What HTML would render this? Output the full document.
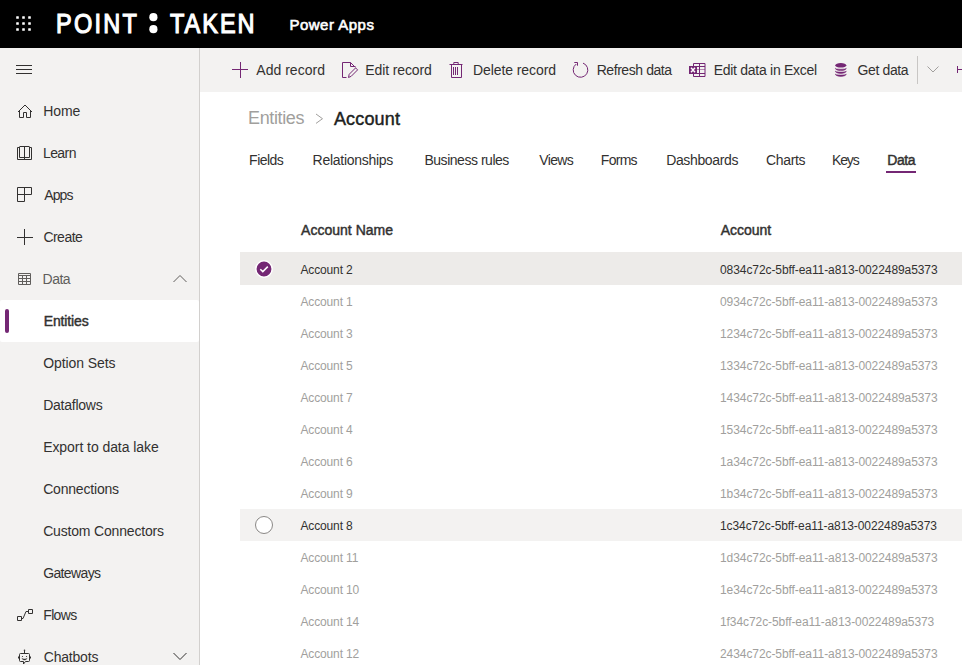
<!DOCTYPE html>
<html><head><meta charset="utf-8">
<style>
*{margin:0;padding:0;box-sizing:border-box}
html,body{width:962px;height:665px;overflow:hidden;background:#fff;font-family:"Liberation Sans",sans-serif;color:#323130}
div{position:absolute;white-space:nowrap}
.r{left:240px;width:722px;height:32px}
.n,.g{font-size:12px;line-height:14px;color:#a19f9d}
.n{left:300.5px}.g{left:720px}
.k{color:#323130}
svg{position:absolute;left:0;top:0}
</style></head><body>
<div style="left:0;top:0;width:962px;height:48px;background:#000"></div>
<div style="left:0;top:48px;width:199px;height:617px;background:#f3f2f1"></div>
<div style="left:200px;top:48px;width:762px;height:44px;background:#f3f2f1"></div>
<div style="left:0;top:300px;width:199px;height:42px;background:#fff;border-radius:2px"></div>
<div style="left:199px;top:48px;width:1px;height:617px;background:#d2d0ce"></div>
<div style="left:5px;top:309px;width:4px;height:24px;background:#742774;border-radius:2px"></div>
<div style="left:886px;top:171px;width:30px;height:2px;background:#742774"></div>
<div style="left:917px;top:56px;width:1px;height:28px;background:#c8c6c4"></div>
<div class="r" style="top:252px;height:33px;background:#edebe9"></div>
<div class="r" style="top:509px;background:#f3f2f1"></div>

<div id="pt" style="left:56.04px;top:9px;font-size:28px;line-height:30px;color:#fff;-webkit-text-stroke:1.2px #fff;transform:scaleX(0.84);transform-origin:0 0;letter-spacing:2.670px">POINT</div>
<div id="tk" style="left:170.00px;top:9px;font-size:28px;line-height:30px;color:#fff;-webkit-text-stroke:1.2px #fff;transform:scaleX(0.84);transform-origin:0 0;letter-spacing:2.350px">TAKEN</div>
<div id="pa" style="left:289.40px;top:16px;font-size:15px;line-height:17px;color:#fff;-webkit-text-stroke:0.6px #fff;letter-spacing:0.500px">Power Apps</div>
<div id="s0" style="left:43.16px;top:103px;font-size:14px;line-height:16px;color:#323130;letter-spacing:-0.060px">Home</div>
<div id="s1" style="left:42.92px;top:145px;font-size:14px;line-height:16px;color:#323130;letter-spacing:-0.562px">Learn</div>
<div id="s2" style="left:44.20px;top:187px;font-size:14px;line-height:16px;color:#323130;letter-spacing:-0.870px">Apps</div>
<div id="s3" style="left:43.40px;top:229px;font-size:14px;line-height:16px;color:#323130;letter-spacing:-0.522px">Create</div>
<div id="s4" style="left:42.60px;top:271px;font-size:14px;line-height:16px;color:#605e5c;letter-spacing:-0.510px">Data</div>
<div id="s5" style="left:43.72px;top:313px;font-size:14px;line-height:16px;color:#323130;-webkit-text-stroke:0.45px #323130;letter-spacing:-0.141px">Entities</div>
<div id="s6" style="left:43.16px;top:355px;font-size:14px;line-height:16px;color:#323130;letter-spacing:-0.072px">Option Sets</div>
<div id="s7" style="left:43.16px;top:397px;font-size:14px;line-height:16px;color:#323130;letter-spacing:-0.236px">Dataflows</div>
<div id="s8" style="left:43.16px;top:439px;font-size:14px;line-height:16px;color:#323130;letter-spacing:-0.065px">Export to data lake</div>
<div id="s9" style="left:43.16px;top:481px;font-size:14px;line-height:16px;color:#323130;letter-spacing:-0.189px">Connections</div>
<div id="s10" style="left:43.16px;top:523px;font-size:14px;line-height:16px;color:#323130;letter-spacing:-0.180px">Custom Connectors</div>
<div id="s11" style="left:43.16px;top:565px;font-size:14px;line-height:16px;color:#323130;letter-spacing:-0.617px">Gateways</div>
<div id="s12" style="left:43.24px;top:607px;font-size:14px;line-height:16px;color:#323130;letter-spacing:-0.652px">Flows</div>
<div id="s13" style="left:43.72px;top:649px;font-size:14px;line-height:16px;color:#323130;letter-spacing:-0.193px">Chatbots</div>
<div id="c0" style="left:256.32px;top:62px;font-size:14px;line-height:16px;color:#323130;letter-spacing:0.020px">Add record</div>
<div id="c1" style="left:365.32px;top:62px;font-size:14px;line-height:16px;color:#323130;letter-spacing:-0.126px">Edit record</div>
<div id="c2" style="left:472.88px;top:62px;font-size:14px;line-height:16px;color:#323130;letter-spacing:-0.067px">Delete record</div>
<div id="c3" style="left:596.64px;top:62px;font-size:14px;line-height:16px;color:#323130;letter-spacing:-0.425px">Refresh data</div>
<div id="c4" style="left:713.72px;top:62px;font-size:14px;line-height:16px;color:#323130;letter-spacing:-0.281px">Edit data in Excel</div>
<div id="c5" style="left:857.48px;top:62px;font-size:14px;line-height:16px;color:#323130;letter-spacing:-0.360px">Get data</div>
<div id="b0" style="left:248.00px;top:108px;font-size:18px;line-height:20px;color:#a19f9d;letter-spacing:-0.360px">Entities</div>
<div id="b1" style="left:333.96px;top:109px;font-size:18px;line-height:20px;color:#201f1e;-webkit-text-stroke:0.45px #201f1e;letter-spacing:0.150px">Account</div>
<div id="t0" style="left:249.12px;top:152px;font-size:14px;line-height:16px;color:#323130;letter-spacing:-0.522px">Fields</div>
<div id="t1" style="left:312.60px;top:152px;font-size:14px;line-height:16px;color:#323130;letter-spacing:-0.278px">Relationships</div>
<div id="t2" style="left:424.44px;top:152px;font-size:14px;line-height:16px;color:#323130;letter-spacing:-0.471px">Business rules</div>
<div id="t3" style="left:539.32px;top:152px;font-size:14px;line-height:16px;color:#323130;letter-spacing:-0.653px">Views</div>
<div id="t4" style="left:600.84px;top:152px;font-size:14px;line-height:16px;color:#323130;letter-spacing:-0.720px">Forms</div>
<div id="t5" style="left:666.16px;top:152px;font-size:14px;line-height:16px;color:#323130;letter-spacing:-0.360px">Dashboards</div>
<div id="t6" style="left:766.04px;top:152px;font-size:14px;line-height:16px;color:#323130;letter-spacing:-0.342px">Charts</div>
<div id="t7" style="left:831.88px;top:152px;font-size:14px;line-height:16px;color:#323130;letter-spacing:-1.080px">Keys</div>
<div id="t8" style="left:887.32px;top:152px;font-size:14px;line-height:16px;color:#323130;-webkit-text-stroke:0.45px #323130;letter-spacing:-0.480px">Data</div>
<div id="h0" style="left:301.12px;top:222px;font-size:14px;line-height:16px;color:#323130;-webkit-text-stroke:0.45px #323130;letter-spacing:0.008px">Account Name</div>
<div id="h1" style="left:720.80px;top:222px;font-size:14px;line-height:16px;color:#323130;-webkit-text-stroke:0.45px #323130;letter-spacing:-0.045px">Account</div>
<div class="n k" style="top:263px;letter-spacing:-0.150px">Account 2</div><div class="g k" style="top:263px;letter-spacing:-0.080px">0834c72c-5bff-ea11-a813-0022489a5373</div>
<div class="n" style="top:295px;letter-spacing:-0.150px">Account 1</div><div class="g" style="top:295px;letter-spacing:-0.080px">0934c72c-5bff-ea11-a813-0022489a5373</div>
<div class="n" style="top:327px;letter-spacing:-0.150px">Account 3</div><div class="g" style="top:327px;letter-spacing:-0.080px">1234c72c-5bff-ea11-a813-0022489a5373</div>
<div class="n" style="top:359px;letter-spacing:-0.150px">Account 5</div><div class="g" style="top:359px;letter-spacing:-0.080px">1334c72c-5bff-ea11-a813-0022489a5373</div>
<div class="n" style="top:391px;letter-spacing:-0.150px">Account 7</div><div class="g" style="top:391px;letter-spacing:-0.080px">1434c72c-5bff-ea11-a813-0022489a5373</div>
<div class="n" style="top:423px;letter-spacing:-0.150px">Account 4</div><div class="g" style="top:423px;letter-spacing:-0.080px">1534c72c-5bff-ea11-a813-0022489a5373</div>
<div class="n" style="top:455px;letter-spacing:-0.150px">Account 6</div><div class="g" style="top:455px;letter-spacing:-0.080px">1a34c72c-5bff-ea11-a813-0022489a5373</div>
<div class="n" style="top:487px;letter-spacing:-0.150px">Account 9</div><div class="g" style="top:487px;letter-spacing:-0.080px">1b34c72c-5bff-ea11-a813-0022489a5373</div>
<div class="n k" style="top:519px;letter-spacing:-0.150px">Account 8</div><div class="g k" style="top:519px;letter-spacing:-0.080px">1c34c72c-5bff-ea11-a813-0022489a5373</div>
<div class="n" style="top:551px;letter-spacing:-0.150px">Account 11</div><div class="g" style="top:551px;letter-spacing:-0.080px">1d34c72c-5bff-ea11-a813-0022489a5373</div>
<div class="n" style="top:583px;letter-spacing:-0.150px">Account 10</div><div class="g" style="top:583px;letter-spacing:-0.080px">1e34c72c-5bff-ea11-a813-0022489a5373</div>
<div class="n" style="top:615px;letter-spacing:-0.150px">Account 14</div><div class="g" style="top:615px;letter-spacing:-0.080px">1f34c72c-5bff-ea11-a813-0022489a5373</div>
<div class="n" style="top:647px;letter-spacing:-0.150px">Account 12</div><div class="g" style="top:647px;letter-spacing:-0.080px">2434c72c-5bff-ea11-a813-0022489a5373</div>
<svg width="962" height="665" viewBox="0 0 962 665" fill="none">
<g fill="#fff"><rect x="16.2" y="16.2" width="2.6" height="2.6" rx="0.4"/><rect x="22.2" y="16.2" width="2.6" height="2.6" rx="0.4"/><rect x="28.2" y="16.2" width="2.6" height="2.6" rx="0.4"/><rect x="16.2" y="22.2" width="2.6" height="2.6" rx="0.4"/><rect x="22.2" y="22.2" width="2.6" height="2.6" rx="0.4"/><rect x="28.2" y="22.2" width="2.6" height="2.6" rx="0.4"/><rect x="16.2" y="28.2" width="2.6" height="2.6" rx="0.4"/><rect x="22.2" y="28.2" width="2.6" height="2.6" rx="0.4"/><rect x="28.2" y="28.2" width="2.6" height="2.6" rx="0.4"/>
<circle cx="153.4" cy="17.2" r="4.1"/><circle cx="153.4" cy="29.2" r="4.1"/></g>
<g stroke="#323130" stroke-width="1">
<path d="M16 65.5H32M16 69.5H32M16 73.5H32"/>
<path d="M18 112L25 105L32 112M19.5 111V117.5H23.5V112.5H26.5V117.5H30.5V111"/>
<path d="M19.5 147.5H17.5V159.5H31.5V147.5H29.5M19.5 157.5V147Q19.5 146.5 20 146.5H29Q29.5 146.5 29.5 147V157.5ZM24.5 146.5V159.5"/>
<path d="M17.5 201.5V187.5H31.5V194.5H17.5M24.5 187.5V201.5H17.5"/>
<path d="M17 237.5H33M24.5 229V245"/>
<path d="M18.5 273.5H30.5V284.5H18.5ZM18.5 275.5H30.5M18.5 278.5H30.5M18.5 281.5H30.5M22.5 275.5V284.5M26.5 275.5V284.5" stroke="#605e5c"/>
<path d="M173.5 282L180 275.5L186.5 282" stroke="#605e5c"/>
<path d="M17.5 616.5h4v4h-4zM28.5 609.5h4v4h-4zM21.5 618.5H23L26 611.5H28.5"/>
<path d="M20.5 653.5H28.5Q29.5 653.5 29.5 654.5V660.5Q29.5 661.5 28.5 661.5H25.5L23.5 664V661.5H20.5Q19.5 661.5 19.5 660.5V654.5Q19.5 653.5 20.5 653.5ZM24.5 650.5V653.5M18.5 656.5V658.5M30.5 656.5V658.5"/><path d="M21.8 658.4Q24.5 661.6 27.2 658.4Q24.5 659.6 21.8 658.4Z" fill="#323130" stroke="#323130" stroke-width="0.4"/>
<circle cx="22.5" cy="656.5" r="0.6" fill="#323130" stroke="none"/><circle cx="26.5" cy="656.5" r="0.6" fill="#323130" stroke="none"/><circle cx="24.5" cy="650.3" r="0.8" fill="#323130" stroke="none"/>
<path d="M173.5 653L180 659.5L186.5 653"/>
</g>
<g stroke="#742774" stroke-width="1">
<path d="M232 69.5H248M240.5 62V78"/>
<path d="M346.5 77.5H342.5V62.5H350.5L355.5 67.5M350.5 62.5V66.5H355.5"/>
<path d="M348.5 77.5L349.2 74.3L355.6 67.9L357.6 69.9L351.2 76.3Z"/>
<path d="M449.5 64.5H462.5M451.5 64.5V77.5H461.5V64.5M453.8 64.5V62.5H458.2V64.5M453.5 67V75M455.5 67V75M457.5 67V75"/>
<path d="M583 63.1A7.3 7.3 0 1 1 576.3 64"/><path d="M574.3 62.5H577.5V65.7"/>
<path d="M693.5 66V76.5H705V63.5H693.5V66M697 66.5H705M697 73.5H705M699.5 63.5V76.5"/>
<path d="M697 69.5H705" stroke-opacity="0.5"/>
<rect x="689" y="66" width="8" height="8" fill="#742774" stroke="none"/>
<path d="M691 67.8L695 72.2M695 67.8L691 72.2" stroke="#fff" stroke-width="1.4"/>
<ellipse cx="840.8" cy="65.3" rx="5.5" ry="2.3" fill="#742774" stroke="none"/>
<path d="M835.3 68.2A5.5 2.4 0 0 0 846.3 68.2A5.5 1.0 0 0 1 835.3 68.2ZM835.3 71.1A5.5 2.4 0 0 0 846.3 71.1A5.5 1.0 0 0 1 835.3 71.1ZM835.3 74.0A5.5 2.4 0 0 0 846.3 74.0A5.5 1.0 0 0 1 835.3 74.0Z" fill="#742774" stroke="#742774" stroke-width="0.5"/>
<path d="M957.5 66V73M958 69.5H962"/>
</g>
<path d="M316 114L322.5 118.7L316 123.4" stroke="#a19f9d" stroke-width="1"/>
<path d="M927.5 66.5L933 72L938.5 66.5" stroke="#a19f9d" stroke-width="1"/>
<circle cx="264" cy="269" r="8.2" fill="#742774" stroke="#fff" stroke-width="1.5"/>
<path d="M260.3 269.2L262.8 271.6L267.8 266.6" stroke="#fff" stroke-width="1.5"/>
<circle cx="264" cy="525" r="8.5" fill="#fff" stroke="#8a8886" stroke-width="1"/>
</svg>

</body></html>
